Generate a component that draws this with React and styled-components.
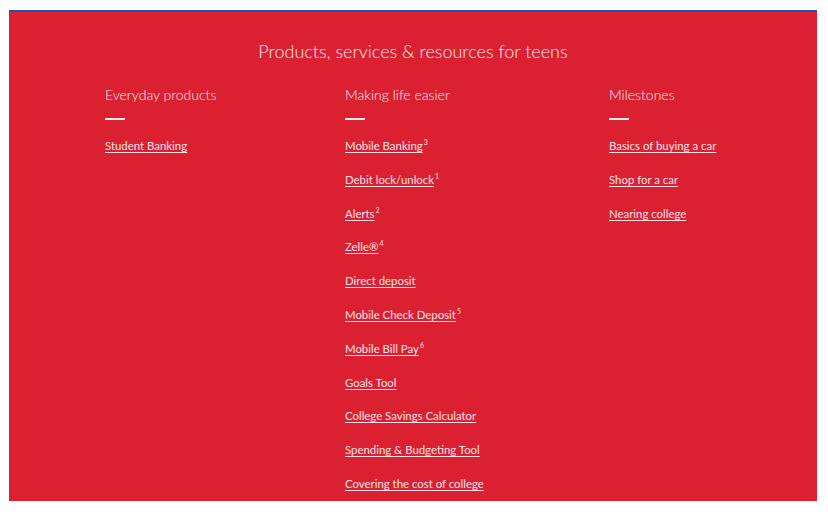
import React from "react";
import styled, { createGlobalStyle } from "styled-components";

const Global = createGlobalStyle`
  html, body { margin: 0; padding: 0; background: #ffffff; }
  body { font-family: Lato, "Open Sans", Arial, sans-serif; }
`;

const Page = styled.div`
  padding: 10px 11px 12px 9px;
`;

const Panel = styled.section`
  background: #db2032;
  border-top: 2px solid #1f4fb3;
  height: 491px;
  box-sizing: border-box;
  color: #fff;
  padding-top: 28px;
  overflow: hidden;
`;

const Title = styled.h2`
  margin: 0;
  text-align: center;
  font-family: Lato, sans-serif;
  font-weight: 300;
  font-size: 18px;
  line-height: 22px;
  color: #fdeef0;
`;

const Columns = styled.div`
  display: grid;
  grid-template-columns: 240px 264px 1fr;
  padding-left: 96px;
  margin-top: 24px;
`;

const Column = styled.div`
  display: flex;
  flex-direction: column;
`;

const Heading = styled.h3`
  margin: 0;
  font-family: Lato, sans-serif;
  font-weight: 300;
  font-size: 14px;
  line-height: 18px;
  color: #fdeef0;
`;

const Dash = styled.span`
  display: block;
  width: 20px;
  height: 2px;
  background: #fdeef0;
  margin-top: 14px;
  margin-bottom: 18px;
`;

const Links = styled.ul`
  list-style: none;
  margin: 0;
  padding: 0;
  display: flex;
  flex-direction: column;
  gap: 17.8px;
`;

const Item = styled.li`
  line-height: 16px;
  height: 16px;
  font-size: 11.4px;
`;

const Link = styled.a`
  font-family: Lato, sans-serif;
  font-size: 11.4px;
  line-height: 16px;
  color: #fce3e7;
  text-decoration: underline;
  text-underline-offset: 2px;
  text-decoration-thickness: 1px;
`;

const Sup = styled.sup`
  font-size: 7px;
  line-height: 0;
  vertical-align: 5px;
  margin-left: 1px;
  color: #fce3e7;
`;

const data = [
  { heading: "Everyday products", links: [["Student Banking"]] },
  {
    heading: "Making life easier",
    links: [
      ["Mobile Banking", "3"],
      ["Debit lock/unlock", "1"],
      ["Alerts", "2"],
      ["Zelle®", "4"],
      ["Direct deposit"],
      ["Mobile Check Deposit", "5"],
      ["Mobile Bill Pay", "6"],
      ["Goals Tool"],
      ["College Savings Calculator"],
      ["Spending & Budgeting Tool"],
      ["Covering the cost of college"],
    ],
  },
  {
    heading: "Milestones",
    links: [["Basics of buying a car"], ["Shop for a car"], ["Nearing college"]],
  },
];

export default function App() {
  return (
    <>
      <Global />
      <Page>
        <Panel>
          <Title>Products, services &amp; resources for teens</Title>
          <Columns>
            {data.map((col) => (
              <Column key={col.heading}>
                <Heading>{col.heading}</Heading>
                <Dash />
                <Links>
                  {col.links.map(([label, sup]) => (
                    <Item key={label}>
                      <Link href="#">{label}</Link>
                      {sup && <Sup>{sup}</Sup>}
                    </Item>
                  ))}
                </Links>
              </Column>
            ))}
          </Columns>
        </Panel>
      </Page>
    </>
  );
}
